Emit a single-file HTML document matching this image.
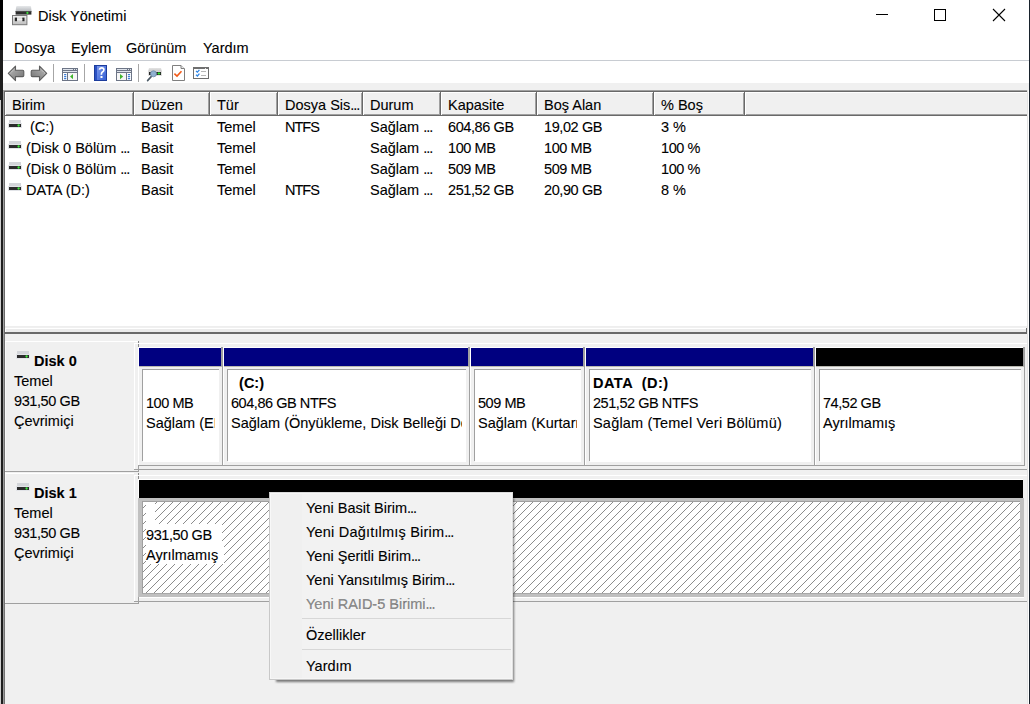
<!DOCTYPE html>
<html><head><meta charset="utf-8"><style>
html,body{margin:0;padding:0;width:1030px;height:704px;overflow:hidden;background:#f0f0f0}
.r{position:absolute}
.t{position:absolute;font-family:"Liberation Sans",sans-serif;font-size:14.5px;line-height:20px;white-space:pre;color:#000;-webkit-text-stroke:0.1px #000}
.clip{position:absolute;overflow:hidden}
.el{letter-spacing:-1px}
.dsk{width:14px;height:8px;background:linear-gradient(#d8d8d8 0,#c8c8c8 45%,#3a3a3a 50%,#2a2a2a 100%)}
</style></head><body>
<div class="r" style="left:0px;top:0px;width:1030px;height:704px;background:#f0f0f0;"></div><div class="r" style="left:0px;top:0px;width:1030px;height:60px;background:#ffffff;"></div><div class="r" style="left:0px;top:61px;width:1030px;height:22px;background:#ffffff;"></div><div class="r" style="left:0px;top:60px;width:1030px;height:1px;background:#c8ccd2;"></div><div class="t" style="left:38px;top:6px;">Disk Yönetimi</div><div class="t" style="left:14px;top:38px;">Dosya</div><div class="t" style="left:71px;top:38px;">Eylem</div><div class="t" style="left:126px;top:38px;">Görünüm</div><div class="t" style="left:203px;top:38px;">Yardım</div><div class="r" style="left:876px;top:14px;width:12px;height:1px;background:#000;"></div><div class="r" style="left:934px;top:9px;width:10px;height:10px;border:1px solid #000"></div><svg class="r" style="left:992px;top:8px" width="14" height="14"><path d="M1 1L13 13M13 1L1 13" stroke="#000" stroke-width="1.1"/></svg><svg class="r" style="left:12px;top:5px" width="21" height="21" viewBox="0 0 21 21"><defs><linearGradient id="ti1" x1="0" y1="0" x2="0" y2="1"><stop offset="0" stop-color="#e6e8ea"/><stop offset="1" stop-color="#b9bcc0"/></linearGradient><linearGradient id="ti2" x1="0" y1="0" x2="0" y2="1"><stop offset="0" stop-color="#f2f2f2"/><stop offset="1" stop-color="#bdbdbd"/></linearGradient></defs><path d="M4.2 1.4 Q4.5 1 5 1 L18.2 1 Q18.8 1 19 1.6 L19.6 6 L3.6 6 Z" fill="url(#ti1)"/><rect x="3.6" y="6" width="15.8" height="3.6" fill="#2e2e2e"/><rect x="3.6" y="6" width="15.8" height="0.8" fill="#555"/><circle cx="15.4" cy="7.9" r="1.1" fill="#3ddc3d"/><rect x="0.5" y="10.5" width="14.4" height="9.2" fill="url(#ti2)" stroke="#7a7a7a" stroke-width="1"/><rect x="2.8" y="12.6" width="2.2" height="3.6" fill="#2a2a2a"/><rect x="10.3" y="12.6" width="2.2" height="3.6" fill="#2a2a2a"/><rect x="5" y="14.2" width="5.3" height="1" fill="#f8f8f8"/></svg><svg class="r" style="left:6px;top:63px" width="20" height="20" viewBox="0 0 20 20"><defs><linearGradient id="ag1" x1="0" y1="0" x2="1" y2="1"><stop offset="0" stop-color="#bdbdbd"/><stop offset="1" stop-color="#6f6f6f"/></linearGradient></defs><path d="M2.3 10.4 L9.5 3.2 L9.5 7.2 L16.6 7.2 Q17.8 7.2 17.8 8.4 L17.8 12.4 Q17.8 13.6 16.6 13.6 L9.5 13.6 L9.5 17.6 Z" fill="url(#ag1)" stroke="#5e5e5e" stroke-width="1.1" stroke-linejoin="round"/><path d="M4 10.4 L8.3 6.1" stroke="#e8e8e8" stroke-width="0.8" stroke-dasharray="1 1"/></svg><svg class="r" style="left:29px;top:63px" width="20" height="20" viewBox="0 0 20 20"><g transform="translate(20,0) scale(-1,1)"><defs><linearGradient id="ag2" x1="0" y1="0" x2="1" y2="1"><stop offset="0" stop-color="#bdbdbd"/><stop offset="1" stop-color="#6f6f6f"/></linearGradient></defs><path d="M2.3 10.4 L9.5 3.2 L9.5 7.2 L16.6 7.2 Q17.8 7.2 17.8 8.4 L17.8 12.4 Q17.8 13.6 16.6 13.6 L9.5 13.6 L9.5 17.6 Z" fill="url(#ag2)" stroke="#5e5e5e" stroke-width="1.1" stroke-linejoin="round"/><path d="M4 10.4 L8.3 6.1" stroke="#e8e8e8" stroke-width="0.8" stroke-dasharray="1 1"/></g></svg><div class="r" style="left:53px;top:64px;width:1px;height:18px;background:#a6a6a6;"></div><div class="r" style="left:84px;top:64px;width:1px;height:18px;background:#a6a6a6;"></div><div class="r" style="left:138px;top:64px;width:1px;height:18px;background:#a6a6a6;"></div><svg class="r" style="left:62px;top:68px" width="16" height="13" viewBox="0 0 16 13"><rect x="0" y="0" width="16" height="13" fill="#6d7586"/><rect x="1" y="1" width="10" height="1" fill="#dfe4ec"/><rect x="12" y="1" width="1" height="1" fill="#dfe4ec"/><rect x="14" y="1" width="1" height="1" fill="#dfe4ec"/><rect x="1" y="3" width="14" height="1" fill="#dfe4ec"/><rect x="1" y="5" width="4" height="7" fill="#fff"/><rect x="6" y="5" width="9" height="7" fill="#f6f6f6"/><rect x="2" y="6" width="2.4" height="1.2" rx="0.5" fill="#3a7bd5"/><rect x="2" y="8" width="2.4" height="1.2" rx="0.5" fill="#3a7bd5"/><rect x="2" y="10" width="2.4" height="1.2" rx="0.5" fill="#3a7bd5"/><path d="M8 8.6 L11 6 L11 11.2 Z" fill="#3fb52e"/></svg><svg class="r" style="left:116px;top:68px" width="16" height="13" viewBox="0 0 16 13"><rect x="0" y="0" width="16" height="13" fill="#6d7586"/><rect x="1" y="1" width="10" height="1" fill="#dfe4ec"/><rect x="12" y="1" width="1" height="1" fill="#dfe4ec"/><rect x="14" y="1" width="1" height="1" fill="#dfe4ec"/><rect x="1" y="3" width="14" height="1" fill="#dfe4ec"/><rect x="1" y="5" width="9" height="7" fill="#f6f6f6"/><rect x="11" y="5" width="4" height="7" fill="#fff"/><rect x="11.8" y="6" width="2.4" height="1.2" rx="0.5" fill="#3a7bd5"/><rect x="11.8" y="8" width="2.4" height="1.2" rx="0.5" fill="#3a7bd5"/><rect x="11.8" y="10" width="2.4" height="1.2" rx="0.5" fill="#3a7bd5"/><path d="M4 6 L7.2 8.6 L4 11.2 Z" fill="#3fb52e"/></svg><svg class="r" style="left:94px;top:65px" width="13" height="16" viewBox="0 0 13 16"><defs><linearGradient id="hb" x1="0" y1="0" x2="1" y2="1"><stop offset="0" stop-color="#7b98ea"/><stop offset="1" stop-color="#3560d6"/></linearGradient></defs><rect width="13" height="16" fill="#1c3c9c"/><rect x="1" y="1" width="2" height="14" fill="#2c52c4"/><rect x="3" y="1" width="9" height="14" fill="url(#hb)"/><path d="M5.3 4.6 Q6 2.8 7.8 2.8 Q9.9 2.8 9.9 4.8 Q9.9 6.3 8.4 7.1 Q7.4 7.7 7.4 9.2 L7.4 9.8" fill="none" stroke="#fff" stroke-width="1.7"/><rect x="6.5" y="11" width="2" height="2" fill="#fff"/></svg><svg class="r" style="left:146px;top:67px" width="17" height="15" viewBox="0 0 17 15"><defs><linearGradient id="rg" x1="0" y1="0" x2="0" y2="1"><stop offset="0" stop-color="#e4e4e4"/><stop offset="1" stop-color="#c4c4c4"/></linearGradient></defs><path d="M3 1 L15 1 L16 4.8 L2 4.8 Z" fill="url(#rg)"/><rect x="2" y="4.8" width="14" height="4" fill="#dcdcdc"/><rect x="3" y="5" width="12" height="3" fill="#262626"/><path d="M11.6 6.5 h2.6 M12.9 5.2 v2.6" stroke="#2ee82e" stroke-width="1.2"/><path d="M5.2 9.6 L1.6 13.6" stroke="#4c5a66" stroke-width="1.6" stroke-linecap="round"/><circle cx="7.5" cy="6.8" r="3" fill="#8fb0d0" stroke="#6d8aa6" stroke-width="0.8"/></svg><svg class="r" style="left:172px;top:65px" width="13" height="16" viewBox="0 0 13 16"><path d="M0.5 0.5 L9 0.5 L12.5 4 L12.5 15.5 L0.5 15.5 Z" fill="#fff" stroke="#7f7f7f"/><path d="M9 0.5 L9 3.5 L12.5 3.5" fill="#e8e8e8" stroke="#7f7f7f"/><path d="M2.4 8.6 L5 11 L9.5 6.2" fill="none" stroke="#f25a18" stroke-width="1.6"/></svg><svg class="r" style="left:193px;top:67px" width="16" height="12" viewBox="0 0 16 12"><rect x="0.5" y="0.5" width="15" height="11" fill="#fff" stroke="#6f6f6f"/><rect x="0" y="0" width="16" height="2" fill="#6f6f6f"/><rect x="12" y="1" width="1" height="1" fill="#ddd"/><path d="M3 4 L4.4 5.2 L6.4 2.8 M3 7.8 L4.4 9 L6.4 6.6" fill="none" stroke="#2f86e6" stroke-width="1.3"/><rect x="8" y="4" width="5" height="1" fill="#b8b8b8"/><rect x="8" y="8" width="5" height="1" fill="#b8b8b8"/></svg><div class="r" style="left:3px;top:90px;width:1025px;height:1px;background:#a0a0a0;"></div><div class="r" style="left:4px;top:91px;width:1024px;height:1px;background:#696969;"></div><div class="r" style="left:3px;top:90px;width:1px;height:244px;background:#a0a0a0;"></div><div class="r" style="left:4px;top:91px;width:1px;height:243px;background:#696969;"></div><div class="r" style="left:5px;top:92px;width:1022px;height:235px;background:#ffffff;"></div><div class="r" style="left:5px;top:92px;width:1022px;height:23px;background:#f0f0f0;"></div><div class="r" style="left:5px;top:92px;width:1022px;height:1px;background:#ffffff;"></div><div class="r" style="left:5px;top:114px;width:1022px;height:1px;background:#a0a0a0;"></div><div class="r" style="left:5px;top:115px;width:1022px;height:1px;background:#696969;"></div><div class="r" style="left:133px;top:92px;width:1px;height:24px;background:#696969;"></div><div class="r" style="left:132px;top:93px;width:1px;height:22px;background:#a0a0a0;"></div><div class="r" style="left:134px;top:92px;width:1px;height:23px;background:#ffffff;"></div><div class="r" style="left:209px;top:92px;width:1px;height:24px;background:#696969;"></div><div class="r" style="left:208px;top:93px;width:1px;height:22px;background:#a0a0a0;"></div><div class="r" style="left:210px;top:92px;width:1px;height:23px;background:#ffffff;"></div><div class="r" style="left:277px;top:92px;width:1px;height:24px;background:#696969;"></div><div class="r" style="left:276px;top:93px;width:1px;height:22px;background:#a0a0a0;"></div><div class="r" style="left:278px;top:92px;width:1px;height:23px;background:#ffffff;"></div><div class="r" style="left:362px;top:92px;width:1px;height:24px;background:#696969;"></div><div class="r" style="left:361px;top:93px;width:1px;height:22px;background:#a0a0a0;"></div><div class="r" style="left:363px;top:92px;width:1px;height:23px;background:#ffffff;"></div><div class="r" style="left:440px;top:92px;width:1px;height:24px;background:#696969;"></div><div class="r" style="left:439px;top:93px;width:1px;height:22px;background:#a0a0a0;"></div><div class="r" style="left:441px;top:92px;width:1px;height:23px;background:#ffffff;"></div><div class="r" style="left:536px;top:92px;width:1px;height:24px;background:#696969;"></div><div class="r" style="left:535px;top:93px;width:1px;height:22px;background:#a0a0a0;"></div><div class="r" style="left:537px;top:92px;width:1px;height:23px;background:#ffffff;"></div><div class="r" style="left:653px;top:92px;width:1px;height:24px;background:#696969;"></div><div class="r" style="left:652px;top:93px;width:1px;height:22px;background:#a0a0a0;"></div><div class="r" style="left:654px;top:92px;width:1px;height:23px;background:#ffffff;"></div><div class="r" style="left:744px;top:92px;width:1px;height:24px;background:#696969;"></div><div class="r" style="left:743px;top:93px;width:1px;height:22px;background:#a0a0a0;"></div><div class="r" style="left:745px;top:92px;width:1px;height:23px;background:#ffffff;"></div><div class="r" style="left:5px;top:92px;width:1px;height:23px;background:#ffffff;"></div><div class="t" style="left:12px;top:95px;">Birim</div><div class="t" style="left:141px;top:95px;">Düzen</div><div class="t" style="left:217px;top:95px;">Tür</div><div class="t" style="left:285px;top:95px;">Dosya Sis<span class="el">..</span>.</div><div class="t" style="left:370px;top:95px;">Durum</div><div class="t" style="left:448px;top:95px;">Kapasite</div><div class="t" style="left:544px;top:95px;">Boş Alan</div><div class="t" style="left:661px;top:95px;">% Boş</div><div class="r" style="left:8px;top:120px"><svg width="14" height="8" viewBox="0 0 14 8" style="display:block"><rect x="1" y="0" width="12" height="4" fill="#d3d5d9"/><rect x="0" y="3" width="14" height="5" fill="#e2e4e8"/><rect x="1" y="4" width="12" height="3" fill="#2b2b2b"/><circle cx="10.6" cy="5.5" r="1.15" fill="#3ee83e"/></svg></div><div class="t" style="left:26px;top:117px;"> (C:)</div><div class="t" style="left:141px;top:117px;">Basit</div><div class="t" style="left:217px;top:117px;">Temel</div><div class="t" style="left:285px;top:117px;letter-spacing:-1px;">NTFS</div><div class="t" style="left:370px;top:117px;">Sağlam <span class="el">..</span>.</div><div class="t" style="left:448px;top:117px;letter-spacing:-0.4px;">604,86 GB</div><div class="t" style="left:544px;top:117px;letter-spacing:-0.4px;">19,02 GB</div><div class="t" style="left:661px;top:117px;">3 %</div><div class="r" style="left:8px;top:141px"><svg width="14" height="8" viewBox="0 0 14 8" style="display:block"><rect x="1" y="0" width="12" height="4" fill="#d3d5d9"/><rect x="0" y="3" width="14" height="5" fill="#e2e4e8"/><rect x="1" y="4" width="12" height="3" fill="#2b2b2b"/><circle cx="10.6" cy="5.5" r="1.15" fill="#3ee83e"/></svg></div><div class="t" style="left:26px;top:138px;">(Disk 0 Bölüm <span class="el">..</span>.</div><div class="t" style="left:141px;top:138px;">Basit</div><div class="t" style="left:217px;top:138px;">Temel</div><div class="t" style="left:285px;top:138px;"></div><div class="t" style="left:370px;top:138px;">Sağlam <span class="el">..</span>.</div><div class="t" style="left:448px;top:138px;letter-spacing:-0.4px;">100 MB</div><div class="t" style="left:544px;top:138px;letter-spacing:-0.4px;">100 MB</div><div class="t" style="left:661px;top:138px;letter-spacing:-0.4px;">100 %</div><div class="r" style="left:8px;top:162px"><svg width="14" height="8" viewBox="0 0 14 8" style="display:block"><rect x="1" y="0" width="12" height="4" fill="#d3d5d9"/><rect x="0" y="3" width="14" height="5" fill="#e2e4e8"/><rect x="1" y="4" width="12" height="3" fill="#2b2b2b"/><circle cx="10.6" cy="5.5" r="1.15" fill="#3ee83e"/></svg></div><div class="t" style="left:26px;top:159px;">(Disk 0 Bölüm <span class="el">..</span>.</div><div class="t" style="left:141px;top:159px;">Basit</div><div class="t" style="left:217px;top:159px;">Temel</div><div class="t" style="left:285px;top:159px;"></div><div class="t" style="left:370px;top:159px;">Sağlam <span class="el">..</span>.</div><div class="t" style="left:448px;top:159px;letter-spacing:-0.4px;">509 MB</div><div class="t" style="left:544px;top:159px;letter-spacing:-0.4px;">509 MB</div><div class="t" style="left:661px;top:159px;letter-spacing:-0.4px;">100 %</div><div class="r" style="left:8px;top:183px"><svg width="14" height="8" viewBox="0 0 14 8" style="display:block"><rect x="1" y="0" width="12" height="4" fill="#d3d5d9"/><rect x="0" y="3" width="14" height="5" fill="#e2e4e8"/><rect x="1" y="4" width="12" height="3" fill="#2b2b2b"/><circle cx="10.6" cy="5.5" r="1.15" fill="#3ee83e"/></svg></div><div class="t" style="left:26px;top:180px;">DATA (D:)</div><div class="t" style="left:141px;top:180px;">Basit</div><div class="t" style="left:217px;top:180px;">Temel</div><div class="t" style="left:285px;top:180px;letter-spacing:-1px;">NTFS</div><div class="t" style="left:370px;top:180px;">Sağlam <span class="el">..</span>.</div><div class="t" style="left:448px;top:180px;letter-spacing:-0.4px;">251,52 GB</div><div class="t" style="left:544px;top:180px;letter-spacing:-0.4px;">20,90 GB</div><div class="t" style="left:661px;top:180px;">8 %</div><div class="r" style="left:5px;top:326px;width:1022px;height:1px;background:#eeeeee;"></div><div class="r" style="left:5px;top:328px;width:1022px;height:1px;background:#ffffff;"></div><div class="r" style="left:5px;top:329px;width:1022px;height:3px;background:#ebebeb;"></div><div class="r" style="left:5px;top:329px;width:1px;height:3px;background:#ffffff;"></div><div class="r" style="left:4px;top:332px;width:1023px;height:1px;background:#696969;"></div><div class="r" style="left:4px;top:333px;width:1023px;height:1px;background:#696969;"></div><div class="r" style="left:1026px;top:328px;width:1px;height:6px;background:#696969;"></div><div class="r" style="left:1027px;top:90px;width:1px;height:244px;background:#e3e3e3;"></div><div class="r" style="left:0px;top:0px;width:3px;height:50px;background:#000;"></div><div class="r" style="left:0px;top:50px;width:3px;height:654px;background:#1e1e1e;"></div><div class="r" style="left:0px;top:100px;width:1px;height:604px;background:#cfcfcf;"></div><div class="r" style="left:3px;top:334px;width:1px;height:370px;background:#999999;"></div><div class="r" style="left:4px;top:334px;width:1px;height:370px;background:#737373;"></div><div class="r" style="left:5px;top:341px;width:1px;height:263px;background:#fafafa;"></div><div class="r" style="left:1027px;top:334px;width:1px;height:370px;background:#e3e3e3;"></div><div class="r" style="left:1028px;top:90px;width:1px;height:614px;background:#ffffff;"></div><div class="r" style="left:1029px;top:0px;width:1px;height:704px;background:#18222c;"></div><div class="r" style="left:5px;top:341px;width:133px;height:1px;background:#ffffff;"></div><div class="r" style="left:5px;top:471px;width:134px;height:1px;background:#a0a0a0;"></div><div class="r" style="left:134px;top:343px;width:893px;height:1px;background:#ffffff;"></div><div class="r" style="left:134px;top:343px;width:1px;height:126px;background:#ffffff;"></div><div class="r" style="left:134px;top:469px;width:893px;height:1px;background:#a0a0a0;"></div><div class="r" style="left:16px;top:351px"><svg width="14" height="8" viewBox="0 0 14 8" style="display:block"><rect x="1" y="0" width="12" height="4" fill="#d3d5d9"/><rect x="0" y="3" width="14" height="5" fill="#e2e4e8"/><rect x="1" y="4" width="12" height="3" fill="#2b2b2b"/><circle cx="10.6" cy="5.5" r="1.15" fill="#3ee83e"/></svg></div><div class="t" style="left:34px;top:351px;font-weight:bold">Disk 0</div><div class="t" style="left:14px;top:371px;">Temel</div><div class="t" style="left:14px;top:391px;letter-spacing:-0.4px;">931,50 GB</div><div class="t" style="left:14px;top:411px;">Çevrimiçi</div><div class="r" style="left:138px;top:341px;width:1px;height:2px;background:#8a8a8a;"></div><div class="r" style="left:138px;top:344px;width:1px;height:3px;background:#8a8a8a;"></div><div class="r" style="left:138px;top:473px;width:1px;height:2px;background:#8a8a8a;"></div><div class="r" style="left:138px;top:476px;width:1px;height:3px;background:#8a8a8a;"></div><div class="r" style="left:138px;top:465px;width:1px;height:7px;background:#a0a0a0;"></div><div class="r" style="left:5px;top:473px;width:129px;height:1px;background:#ffffff;"></div><div class="r" style="left:5px;top:603px;width:134px;height:1px;background:#a0a0a0;"></div><div class="r" style="left:134px;top:475px;width:893px;height:1px;background:#ffffff;"></div><div class="r" style="left:134px;top:475px;width:1px;height:126px;background:#ffffff;"></div><div class="r" style="left:134px;top:601px;width:893px;height:1px;background:#a0a0a0;"></div><div class="r" style="left:16px;top:483px"><svg width="14" height="8" viewBox="0 0 14 8" style="display:block"><rect x="1" y="0" width="12" height="4" fill="#d3d5d9"/><rect x="0" y="3" width="14" height="5" fill="#e2e4e8"/><rect x="1" y="4" width="12" height="3" fill="#2b2b2b"/><circle cx="10.6" cy="5.5" r="1.15" fill="#3ee83e"/></svg></div><div class="t" style="left:34px;top:483px;font-weight:bold">Disk 1</div><div class="t" style="left:14px;top:503px;">Temel</div><div class="t" style="left:14px;top:523px;letter-spacing:-0.4px;">931,50 GB</div><div class="t" style="left:14px;top:543px;">Çevrimiçi</div><div class="r" style="left:138px;top:347px;width:1px;height:118px;background:#ffffff;"></div><div class="r" style="left:138px;top:347px;width:83px;height:1px;background:#ffffff;"></div><div class="r" style="left:139px;top:348px;width:82px;height:18px;background:#000080;"></div><div class="r" style="left:139px;top:366px;width:84px;height:1px;background:#b9b9b0;"></div><div class="r" style="left:221px;top:347px;width:1px;height:19px;background:#a0a0a0;"></div><div class="r" style="left:222px;top:347px;width:1px;height:119px;background:#a0a0a0;"></div><div class="r" style="left:138px;top:465px;width:85px;height:1px;background:#a0a0a0;"></div><div class="r" style="left:142px;top:369px;width:1px;height:92px;background:#a0a0a0;"></div><div class="r" style="left:142px;top:369px;width:77px;height:1px;background:#a0a0a0;"></div><div class="r" style="left:143px;top:370px;width:76px;height:92px;background:#ffffff;"></div><div class="clip" style="left:143px;top:370px;width:72px;height:92px"><div class="t" style="left:3px;top:3px;font-weight:bold;"></div><div class="t" style="left:3px;top:23px;letter-spacing:-0.45px;">100 MB</div><div class="t" style="left:3px;top:43px;">Sağlam (EFI Sistem Bölümü)</div></div><div class="r" style="left:223px;top:347px;width:1px;height:118px;background:#ffffff;"></div><div class="r" style="left:223px;top:347px;width:245px;height:1px;background:#ffffff;"></div><div class="r" style="left:224px;top:348px;width:244px;height:18px;background:#000080;"></div><div class="r" style="left:224px;top:366px;width:246px;height:1px;background:#b9b9b0;"></div><div class="r" style="left:468px;top:347px;width:1px;height:19px;background:#a0a0a0;"></div><div class="r" style="left:469px;top:347px;width:1px;height:119px;background:#a0a0a0;"></div><div class="r" style="left:223px;top:465px;width:247px;height:1px;background:#a0a0a0;"></div><div class="r" style="left:227px;top:369px;width:1px;height:92px;background:#a0a0a0;"></div><div class="r" style="left:227px;top:369px;width:239px;height:1px;background:#a0a0a0;"></div><div class="r" style="left:228px;top:370px;width:238px;height:92px;background:#ffffff;"></div><div class="clip" style="left:228px;top:370px;width:234px;height:92px"><div class="t" style="left:3px;top:3px;font-weight:bold;">  (C:)</div><div class="t" style="left:3px;top:23px;letter-spacing:-0.45px;">604,86 GB NTFS</div><div class="t" style="left:3px;top:43px;">Sağlam (Önyükleme, Disk Belleği Dosyası, Kilitlenme Dökümü)</div></div><div class="r" style="left:470px;top:347px;width:1px;height:118px;background:#ffffff;"></div><div class="r" style="left:470px;top:347px;width:113px;height:1px;background:#ffffff;"></div><div class="r" style="left:471px;top:348px;width:112px;height:18px;background:#000080;"></div><div class="r" style="left:471px;top:366px;width:114px;height:1px;background:#b9b9b0;"></div><div class="r" style="left:583px;top:347px;width:1px;height:19px;background:#a0a0a0;"></div><div class="r" style="left:584px;top:347px;width:1px;height:119px;background:#a0a0a0;"></div><div class="r" style="left:470px;top:465px;width:115px;height:1px;background:#a0a0a0;"></div><div class="r" style="left:474px;top:369px;width:1px;height:92px;background:#a0a0a0;"></div><div class="r" style="left:474px;top:369px;width:107px;height:1px;background:#a0a0a0;"></div><div class="r" style="left:475px;top:370px;width:106px;height:92px;background:#ffffff;"></div><div class="clip" style="left:475px;top:370px;width:102px;height:92px"><div class="t" style="left:3px;top:3px;font-weight:bold;"></div><div class="t" style="left:3px;top:23px;letter-spacing:-0.45px;">509 MB</div><div class="t" style="left:3px;top:43px;">Sağlam (Kurtarma Bölümü)</div></div><div class="r" style="left:585px;top:347px;width:1px;height:118px;background:#ffffff;"></div><div class="r" style="left:585px;top:347px;width:228px;height:1px;background:#ffffff;"></div><div class="r" style="left:586px;top:348px;width:227px;height:18px;background:#000080;"></div><div class="r" style="left:586px;top:366px;width:229px;height:1px;background:#b9b9b0;"></div><div class="r" style="left:813px;top:347px;width:1px;height:19px;background:#a0a0a0;"></div><div class="r" style="left:814px;top:347px;width:1px;height:119px;background:#a0a0a0;"></div><div class="r" style="left:585px;top:465px;width:230px;height:1px;background:#a0a0a0;"></div><div class="r" style="left:589px;top:369px;width:1px;height:92px;background:#a0a0a0;"></div><div class="r" style="left:589px;top:369px;width:222px;height:1px;background:#a0a0a0;"></div><div class="r" style="left:590px;top:370px;width:221px;height:92px;background:#ffffff;"></div><div class="clip" style="left:590px;top:370px;width:217px;height:92px"><div class="t" style="left:3px;top:3px;font-weight:bold;letter-spacing:0.5px;">DATA  (D:)</div><div class="t" style="left:3px;top:23px;letter-spacing:-0.45px;">251,52 GB NTFS</div><div class="t" style="left:3px;top:43px;letter-spacing:0.2px;">Sağlam (Temel Veri Bölümü)</div></div><div class="r" style="left:815px;top:347px;width:1px;height:118px;background:#ffffff;"></div><div class="r" style="left:815px;top:347px;width:208px;height:1px;background:#ffffff;"></div><div class="r" style="left:816px;top:348px;width:207px;height:18px;background:#000000;"></div><div class="r" style="left:816px;top:366px;width:209px;height:1px;background:#b9b9b0;"></div><div class="r" style="left:1023px;top:347px;width:1px;height:19px;background:#a0a0a0;"></div><div class="r" style="left:1024px;top:347px;width:1px;height:119px;background:#a0a0a0;"></div><div class="r" style="left:815px;top:465px;width:210px;height:1px;background:#a0a0a0;"></div><div class="r" style="left:819px;top:369px;width:1px;height:92px;background:#a0a0a0;"></div><div class="r" style="left:819px;top:369px;width:202px;height:1px;background:#a0a0a0;"></div><div class="r" style="left:820px;top:370px;width:201px;height:92px;background:#ffffff;"></div><div class="clip" style="left:820px;top:370px;width:197px;height:92px"><div class="t" style="left:3px;top:3px;font-weight:bold;"></div><div class="t" style="left:3px;top:23px;letter-spacing:-0.45px;">74,52 GB</div><div class="t" style="left:3px;top:43px;">Ayrılmamış</div></div><div class="r" style="left:138px;top:479px;width:1px;height:119px;background:#ffffff;"></div><div class="r" style="left:138px;top:479px;width:885px;height:1px;background:#ffffff;"></div><div class="r" style="left:139px;top:480px;width:884px;height:18px;background:#000;"></div><div class="r" style="left:138px;top:498px;width:886px;height:99px;background:#c0c0c0;"></div><div class="r" style="left:142px;top:501px;width:1px;height:93px;background:#a0a0a0;"></div><div class="r" style="left:142px;top:501px;width:878px;height:1px;background:#a0a0a0;"></div><div class="r" style="left:142px;top:593px;width:878px;height:1px;background:#a8a8a8;"></div><div class="r" style="left:138px;top:597px;width:886px;height:1px;background:#ffffff;"></div><div class="r" style="left:138px;top:597px;width:1px;height:7px;background:#a0a0a0;"></div><svg class="r" style="left:143px;top:502px" width="877" height="91"><defs><pattern id="h" width="8" height="8" patternUnits="userSpaceOnUse" x="-143" y="-502"><path d="M2 0h1v1h-1zM1 1h1v1h-1zM0 2h1v1h-1zM7 3h1v1h-1zM6 4h1v1h-1zM5 5h1v1h-1zM4 6h1v1h-1zM3 7h1v1h-1z" fill="#8c8c8c"/></pattern></defs><rect width="877" height="91" fill="#fff"/><rect width="877" height="91" fill="url(#h)"/></svg><div class="r" style="left:146px;top:502px;width:9px;height:22px;background:#fff;"></div><div class="r" style="left:146px;top:524px;width:76px;height:20px;background:#fff;"></div><div class="r" style="left:146px;top:544px;width:78px;height:20px;background:#fff;"></div><div class="t" style="left:146px;top:525px;letter-spacing:-0.4px;">931,50 GB</div><div class="t" style="left:146px;top:545px;">Ayrılmamış</div><div class="r" style="left:276px;top:498px;width:238px;height:184px;background:rgba(0,0,0,0.5);filter:blur(1px)"></div><div class="r" style="left:269px;top:492px;width:242px;height:186px;border-style:solid;border-width:1px;border-color:#dcdcdc #e0e0e0 #c8c8c8 #c8c8c8;background:#f0f0f0"></div><div class="r" style="left:302px;top:494px;width:209px;height:184px;background:#f2f2f2;"></div><div class="r" style="left:270px;top:493px;width:1px;height:185px;background:#f8f8f8;"></div><div class="r" style="left:270px;top:493px;width:242px;height:1px;background:#f6f6f6;"></div><div class="r" style="left:270px;top:678px;width:242px;height:1px;background:#f6f6f6;"></div><div class="r" style="left:511px;top:493px;width:1px;height:186px;background:#f6f6f6;"></div><div class="t" style="left:306px;top:498px;">Yeni Basit Birim<span class="el">..</span>.</div><div class="t" style="left:306px;top:522px;letter-spacing:0.2px;">Yeni Dağıtılmış Birim<span class="el">..</span>.</div><div class="t" style="left:306px;top:546px;">Yeni Şeritli Birim<span class="el">..</span>.</div><div class="t" style="left:306px;top:570px;">Yeni Yansıtılmış Birim<span class="el">..</span>.</div><div class="t" style="left:306px;top:594px;color:#8d8d8d;">Yeni RAID-5 Birimi<span class="el">..</span>.</div><div class="r" style="left:302px;top:618px;width:209px;height:1px;background:#d7d7d7;"></div><div class="r" style="left:302px;top:649px;width:209px;height:1px;background:#d7d7d7;"></div><div class="t" style="left:306px;top:625px;">Özellikler</div><div class="t" style="left:306px;top:656px;">Yardım</div>
</body></html>
